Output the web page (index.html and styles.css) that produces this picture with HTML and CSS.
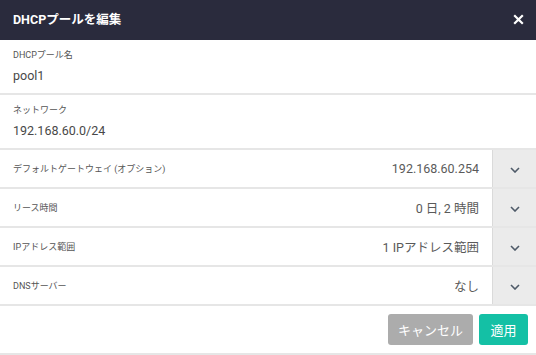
FILE: index.html
```html
<!DOCTYPE html>
<html lang="ja">
<head>
<meta charset="utf-8">
<title>DHCPプールを編集</title>
<link rel="stylesheet" href="styles.css">
</head>
<body>
<div class="dialog">
  <header class="dlg-header">
    <h1 class="title">DHCPプールを編集</h1>
    <button class="close" aria-label="閉じる">
      <svg width="11" height="11" viewBox="0 0 11 11"><path d="M1.2 1.2 L9.8 9.8 M9.8 1.2 L1.2 9.8" stroke="#fff" stroke-width="2.2" fill="none"/></svg>
    </button>
  </header>

  <div class="field">
    <div class="label">DHCPプール名</div>
    <div class="value">pool1</div>
  </div>
  <div class="field">
    <div class="label">ネットワーク</div>
    <div class="value">192.168.60.0/24</div>
  </div>

  <div class="row">
    <div class="row-main"><span class="label">デフォルトゲートウェイ (オプション)</span><span class="row-value">192.168.60.254</span></div>
    <div class="toggle"><svg width="10" height="6" viewBox="0 0 10 6"><path d="M1 1 L5 5 L9 1" stroke="#4e5a68" stroke-width="1.6" fill="none"/></svg></div>
  </div>
  <div class="row">
    <div class="row-main"><span class="label">リース時間</span><span class="row-value">0 日, 2 時間</span></div>
    <div class="toggle"><svg width="10" height="6" viewBox="0 0 10 6"><path d="M1 1 L5 5 L9 1" stroke="#4e5a68" stroke-width="1.6" fill="none"/></svg></div>
  </div>
  <div class="row">
    <div class="row-main"><span class="label">IPアドレス範囲</span><span class="row-value">1 IPアドレス範囲</span></div>
    <div class="toggle"><svg width="10" height="6" viewBox="0 0 10 6"><path d="M1 1 L5 5 L9 1" stroke="#4e5a68" stroke-width="1.6" fill="none"/></svg></div>
  </div>
  <div class="row">
    <div class="row-main"><span class="label">DNSサーバー</span><span class="row-value">なし</span></div>
    <div class="toggle"><svg width="10" height="6" viewBox="0 0 10 6"><path d="M1 1 L5 5 L9 1" stroke="#4e5a68" stroke-width="1.6" fill="none"/></svg></div>
  </div>

  <div class="footer">
    <button class="btn cancel">キャンセル</button>
    <button class="btn apply">適用</button>
  </div>
</div>
</body>
</html>
```

FILE: styles.css
```css
html, body {
  margin: 0;
  padding: 0;
  background: #fff;
}
body {
  font-family: Roboto, "Noto Sans CJK JP", sans-serif;
  color: #444;
}
.dialog {
  width: 536px;
}
.dlg-header {
  height: 40px;
  background: #2a2b3d;
  display: flex;
  align-items: center;
  justify-content: space-between;
  padding: 0 13px 1px 13px;
  box-sizing: border-box;
}
.title {
  margin: 0;
  font-size: 12.5px;
  font-weight: 700;
  color: #fff;
  line-height: 16px;
}
.close {
  background: none;
  border: 0;
  padding: 0;
  width: 11px;
  height: 11px;
  margin-right: -1px;
  display: flex;
}
.field {
  padding: 9px 13px 9px;
  border-bottom: 2px solid #e6e6e6;
}
.field .label {
  line-height: 12px;
  margin-bottom: 7px;
}
.label {
  font-size: 9px;
  color: #555;
}
.value {
  font-size: 12.5px;
  line-height: 16px;
  color: #484848;
}
.row {
  display: flex;
  height: 37px;
  border-bottom: 2px solid #e6e6e6;
}
.row-main {
  flex: 1;
  display: flex;
  align-items: center;
  justify-content: space-between;
  padding: 0 13px;
}
.row-value {
  font-size: 12.5px;
  color: #5a5a5a;
}
.toggle {
  width: 44px;
  background: #ebebeb;
  border-left: 1px solid #dadada;
  display: flex;
  align-items: center;
  justify-content: center;
  padding-top: 3px;
  box-sizing: border-box;
}
.footer {
  display: flex;
  justify-content: flex-end;
  gap: 6px;
  padding: 8px;
  border-bottom: 2px solid #e6e6e6;
}
.btn {
  height: 31px;
  border: 0;
  border-radius: 3px;
  color: #fff;
  font-family: Roboto, "Noto Sans CJK JP", sans-serif;
  font-size: 13px;
  padding: 0;
}
.cancel {
  width: 85px;
  background: #acacac;
}
.apply {
  width: 49px;
  background: #14c0a5;
}
```
